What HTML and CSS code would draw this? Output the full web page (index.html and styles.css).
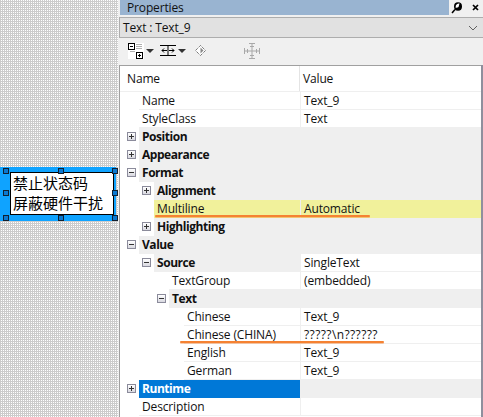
FILE: index.html
```html
<!DOCTYPE html>
<html lang="en">
<head>
  <meta charset="UTF-8">
  <title>Properties</title>
  <link rel="stylesheet" href="styles.css">
</head>
<body>

  <div class="canvas">
    <div class="widget">
      <div class="widget-text">禁止状态码<br>屏蔽硬件干扰</div>
      <span class="handle h-tl"></span>
      <span class="handle h-tc"></span>
      <span class="handle h-tr"></span>
      <span class="handle h-ml"></span>
      <span class="handle h-mr"></span>
      <span class="handle h-bl"></span>
      <span class="handle h-bc"></span>
      <span class="handle h-br"></span>
    </div>
  </div>

  <div class="panel">
    <div class="titlebar">
      <div class="title">Properties</div>
      <div class="title-btns">
        <svg width="12" height="13" viewBox="0 0 12 13">
          <path d="M1 12 L4 8.5" stroke="#000" stroke-width="1.5"/>
          <ellipse cx="7" cy="5.5" rx="4" ry="4.2" fill="#000"/>
          <path d="M5 4 Q6.5 2 8.5 2.5 L7.5 6 Q6 7 4.5 6.5Z" fill="#fff"/>
        </svg>
        <svg width="7" height="7" viewBox="0 0 7 7">
          <path d="M1 1 L6 6 M6 1 L1 6" stroke="#000" stroke-width="1.7"/>
        </svg>
      </div>
    </div>

    <div class="combo">
      <span>Text : Text_9</span>
      <svg width="10" height="6" viewBox="0 0 10 6">
        <path d="M1 1 L5 5 L9 1" fill="none" stroke="#606060" stroke-width="1"/>
      </svg>
    </div>

    <div class="toolbar">
      <svg class="tool-tree" width="16" height="16" viewBox="0 0 16 16">
        <rect x="0" y="0" width="16" height="16" fill="#fff"/>
        <rect x="0.5" y="0.5" width="6" height="6" fill="#fff" stroke="#000"/>
        <path d="M2 3.5 H5" stroke="#000"/>
        <path d="M8 1.5 H14 M8 3.5 H14 M8 5.5 H14 M2 8.5 H7" stroke="#b0b0b0"/>
        <rect x="8.5" y="9.5" width="6" height="6" fill="#fff" stroke="#000"/>
        <path d="M10 12.5 H13 M11.5 11 V14" stroke="#000"/>
      </svg>
      <span class="caret caret-a"></span>
      <svg class="tool-cols" width="16" height="11" viewBox="0 0 16 11">
        <path d="M0 0.5 H16 M0 10.5 H16" stroke="#000"/>
        <path d="M8 0 V11" stroke="#000"/>
        <path d="M7 5.5 H2 M4 3.5 L2 5.5 L4 7.5 M9 5.5 H14 M12 3.5 L14 5.5 L12 7.5" fill="none" stroke="#000"/>
      </svg>
      <span class="caret caret-b"></span>
      <svg class="tool-diamond" width="11" height="11" viewBox="0 0 11 11">
        <path d="M5.5 0.5 L10.5 5.5 L5.5 10.5 L0.5 5.5Z" fill="#fff" stroke="#444" stroke-dasharray="1 1"/>
        <path d="M5.5 2.5 L8.5 5.5 L5.5 8.5Z" fill="#888"/>
      </svg>
      <svg class="tool-move" width="16" height="16" viewBox="0 0 16 16">
        <g fill="none" stroke="#a8a8a8">
          <path d="M5 0.5 H11 M8 1 V15 M5 15.5 H11 M6 3.5 H10 M6 12.5 H10"/>
          <path d="M0.5 5 V11 M15.5 5 V11 M1 8 H15 M3.5 6 V10 M12.5 6 V10"/>
        </g>
      </svg>
    </div>

    <div class="grid">
      <div class="header">
        <div class="head-name">Name</div>
        <div class="head-value">Value</div>
      </div>

      <div class="row leaf"><div class="gutter l0"></div><div class="name">Name</div><div class="value">Text_9</div></div>
      <div class="row leaf"><div class="gutter l0"></div><div class="name">StyleClass</div><div class="value">Text</div></div>
      <div class="row group"><div class="gutter l0"><i class="box plus"></i></div><div class="name">Position</div><div class="value"></div></div>
      <div class="row group"><div class="gutter l0"><i class="box plus"></i></div><div class="name">Appearance</div><div class="value"></div></div>
      <div class="row group"><div class="gutter l0"><i class="box"></i></div><div class="name">Format</div><div class="value"></div></div>
      <div class="row group"><div class="gutter l1"><i class="box plus"></i></div><div class="name">Alignment</div><div class="value"></div></div>
      <div class="row leaf marked"><div class="gutter l1"></div><div class="name">Multiline</div><div class="value">Automatic</div></div>
      <div class="row group"><div class="gutter l1"><i class="box plus"></i></div><div class="name">Highlighting</div><div class="value"></div></div>
      <div class="row group"><div class="gutter l0"><i class="box"></i></div><div class="name">Value</div><div class="value"></div></div>
      <div class="row group mixed"><div class="gutter l1"><i class="box"></i></div><div class="name">Source</div><div class="value">SingleText</div></div>
      <div class="row leaf"><div class="gutter l2"></div><div class="name">TextGroup</div><div class="value">(embedded)</div></div>
      <div class="row group"><div class="gutter l2"><i class="box"></i></div><div class="name">Text</div><div class="value"></div></div>
      <div class="row leaf"><div class="gutter l3"></div><div class="name">Chinese</div><div class="value">Text_9</div></div>
      <div class="row leaf"><div class="gutter l3"></div><div class="name">Chinese (CHINA)</div><div class="value qmarks">?????\n??????</div></div>
      <div class="row leaf"><div class="gutter l3"></div><div class="name">English</div><div class="value">Text_9</div></div>
      <div class="row leaf"><div class="gutter l3"></div><div class="name">German</div><div class="value">Text_9</div></div>
      <div class="row group selected"><div class="gutter l0"><i class="box plus"></i></div><div class="name">Runtime</div><div class="value"></div></div>
      <div class="row leaf"><div class="gutter l0"></div><div class="name">Description</div><div class="value"></div></div>

      <div class="mark mark-a"></div>
      <div class="mark mark-b"></div>
    </div>
  </div>

</body>
</html>
```

FILE: styles.css
```css
html, body {
  margin: 0;
  height: 100%;
  overflow: hidden;
}
body {
  display: flex;
  width: 483px;
  height: 417px;
  font-family: "Open Sans", "Noto Sans", sans-serif;
  font-size: 12px;
  letter-spacing: -0.15px;
  color: #111;
  background-color: #f0f0f0;
}

/* design canvas */
.canvas {
  position: relative;
  width: 118px;
  flex: none;
  background: conic-gradient(#fff 25%, #ccc 0) 0 0 / 2px 2px;
}
.widget {
  position: absolute;
  left: 0;
  top: 167px;
  width: 116px;
  height: 54px;
  background-color: #0fa3ff;
}
.widget-text {
  position: absolute;
  left: 10px;
  top: 5px;
  width: 104px;
  height: 43px;
  box-sizing: border-box;
  padding: 0 0 0 2px;
  border: 1px solid #000;
  background: #fff;
  color: #000;
  font-family: "Noto Sans CJK SC", sans-serif;
  font-size: 15px;
  letter-spacing: 0;
  line-height: 20px;
  white-space: nowrap;
}
.handle {
  position: absolute;
  width: 4px;
  height: 4px;
  border: 1px solid #102030;
  background: #0b78d0;
}
.h-tl { left: 3px; top: 1px; }
.h-tc { left: 58px; top: 1px; }
.h-tr { left: 112px; top: 1px; }
.h-ml { left: 3px; top: 23px; }
.h-mr { left: 112px; top: 23px; }
.h-bl { left: 3px; top: 48px; }
.h-bc { left: 58px; top: 48px; }
.h-br { left: 112px; top: 48px; }

/* properties panel */
.panel {
  flex: 1;
  display: flex;
  flex-direction: column;
  padding-left: 1px;
  min-width: 0;
}
.titlebar {
  display: flex;
  height: 15px;
  margin-left: 1px;
  flex: none;
}
.title {
  flex: 1;
  padding-left: 7px;
  line-height: 15px;
  background-color: #99b4d1;
}
.title-btns {
  display: flex;
  align-items: center;
  gap: 9px;
  width: 34px;
  padding-left: 2px;
  box-sizing: border-box;
}
.combo {
  display: flex;
  align-items: center;
  justify-content: space-between;
  height: 21px;
  margin-top: 2px;
  padding: 0 5px 0 3px;
  flex: none;
  border: 1px solid #adadad;
  border-right: none;
  box-sizing: border-box;
  background-color: #e1e1e1;
}
.toolbar {
  position: relative;
  height: 27px;
  flex: none;
}
.toolbar svg, .caret {
  position: absolute;
}
.tool-tree { left: 9px; top: 5px; }
.tool-cols { left: 41px; top: 7px; }
.tool-diamond { left: 76px; top: 7px; }
.tool-move { left: 125px; top: 5px; }
.caret {
  width: 0;
  height: 0;
  border: 4px solid transparent;
  border-top: 4px solid #333;
}
.caret-a { left: 27px; top: 11px; }
.caret-b { left: 59px; top: 11px; }

.grid {
  position: relative;
  flex: 1;
  margin-right: 2px;
  border-top: 1px solid #a0a0a0;
  border-left: 1px solid #a0a0a0;
  background-color: #fff;
  box-shadow: 2px 0 0 #8f8f9d;
}
.header {
  display: flex;
  height: 26px;
  line-height: 26px;
  border-bottom: 1px solid #efefef;
  box-sizing: border-box;
}
.head-name {
  width: 180px;
  padding-left: 7px;
  box-sizing: border-box;
  border-right: 1px solid #e4e4e4;
}
.head-value {
  padding-left: 3px;
}
.row {
  display: flex;
  height: 18px;
  line-height: 17px;
}
.gutter {
  position: relative;
  flex: none;
  background: #fff;
}
.l0 { width: 19px; }
.l1 { width: 34px; }
.l2 { width: 49px; }
.l3 { width: 64px; }
.name {
  flex: 1;
  min-width: 0;
  padding-left: 3px;
  white-space: nowrap;
  border-right: 1px solid #efefef;
}
.value {
  width: 180px;
  padding-left: 3px;
  box-sizing: border-box;
  flex: none;
}
.qmarks {
  letter-spacing: 0.4px;
}
.leaf .name, .leaf .value {
  border-bottom: 1px solid #efefef;
}
.group .name, .group .value {
  background-color: #efefef;
}
.group .name {
  font-weight: 700;
  letter-spacing: -0.45px;
  border-right-color: #efefef;
}
.mixed .value {
  background-color: #fff;
  border-bottom: 1px solid #efefef;
  font-weight: 400;
}
.marked .name, .marked .value {
  background-color: #f1f19b;
  border-bottom-color: #f1f19b;
}
.selected .name {
  background-color: #0078d7;
  color: #fff;
}

/* expand box */
.box {
  position: absolute;
  right: 3px;
  top: 4px;
  width: 7px;
  height: 7px;
  border: 1px solid #8b8b9b;
  background: linear-gradient(#ffffff, #d8d8e0);
}
.box::before {
  content: "";
  position: absolute;
  left: 1px;
  top: 3px;
  width: 5px;
  height: 1px;
  background: #333;
}
.box.plus::after {
  content: "";
  position: absolute;
  left: 3px;
  top: 1px;
  width: 1px;
  height: 5px;
  background: #333;
}

/* hand drawn orange underlines */
.mark {
  position: absolute;
  height: 2px;
  background: #f58232;
  border-radius: 1px;
  box-shadow: 0 1px 0 rgba(245, 130, 50, 0.4);
}
.mark-a { left: 35px; top: 149px; width: 215px; }
.mark-b { left: 60px; top: 275px; width: 204px; }
```
